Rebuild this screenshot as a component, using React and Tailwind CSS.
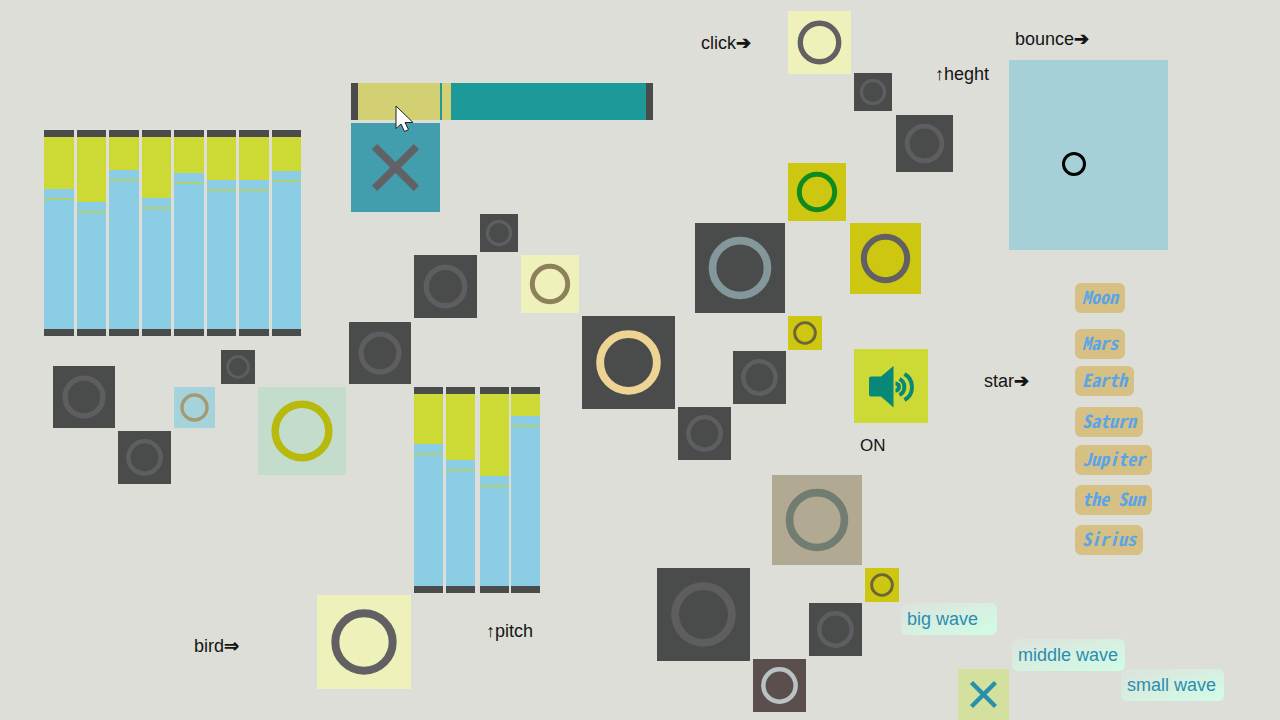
import React, { useState } from 'react';

const bangs = [
  { id: 'click', className: 'left-[788px] top-[11px] size-[63px] bg-[#eef1b9] text-[#626063]' },
  { id: 'height 1', className: 'left-[854px] top-[73px] size-[38px] bg-[#4a4c4b] text-[#5e5e61]' },
  { id: 'height 2', className: 'left-[896px] top-[115px] size-[57px] bg-[#4a4c4b] text-[#5e5e61]' },
  { id: 'green', className: 'left-[788px] top-[163px] size-[58px] bg-[#cec711] text-[#108a1e]' },
  { id: 'steel', className: 'left-[695px] top-[223px] size-[90px] bg-[#4a4c4b] text-[#84979b]' },
  { id: 'yellow 1', className: 'left-[850px] top-[223px] size-[71px] bg-[#cec711] text-[#626063]' },
  { id: 'yellow 2', className: 'left-[788px] top-[316px] size-[34px] bg-[#cec711] text-[#6c6636]' },
  { id: 'step 1', className: 'left-[733px] top-[351px] size-[53px] bg-[#4a4c4b] text-[#5e5e61]' },
  { id: 'step 2', className: 'left-[678px] top-[407px] size-[53px] bg-[#4a4c4b] text-[#5e5e61]' },
  { id: 'sand', className: 'left-[582px] top-[316px] size-[93px] bg-[#4a4c4b] text-[#edd494]' },
  { id: 'cream', className: 'left-[521px] top-[255px] size-[58px] bg-[#eef1b9] text-[#8d815c]' },
  { id: 'step 3', className: 'left-[480px] top-[214px] size-[38px] bg-[#4a4c4b] text-[#5e5e61]' },
  { id: 'step 4', className: 'left-[414px] top-[255px] size-[63px] bg-[#4a4c4b] text-[#5e5e61]' },
  { id: 'step 5', className: 'left-[349px] top-[322px] size-[62px] bg-[#4a4c4b] text-[#5e5e61]' },
  { id: 'mint', className: 'left-[258px] top-[387px] size-[88px] bg-[#c3dccb] text-[#b7ba0d]' },
  { id: 'step 6', className: 'left-[221px] top-[350px] size-[34px] bg-[#4a4c4b] text-[#5e5e61]' },
  { id: 'sky', className: 'left-[174px] top-[387px] size-[41px] bg-[#a4d3dc] text-[#a89a70]' },
  { id: 'step 7', className: 'left-[118px] top-[431px] size-[53px] bg-[#4a4c4b] text-[#5e5e61]' },
  { id: 'step 8', className: 'left-[53px] top-[366px] size-[62px] bg-[#4a4c4b] text-[#5e5e61]' },
  { id: 'bird', className: 'left-[317px] top-[595px] size-[94px] bg-[#eef1b9] text-[#626063]' },
  { id: 'tan', className: 'left-[772px] top-[475px] size-[90px] bg-[#b2a992] text-[#717d70]' },
  { id: 'wave 1', className: 'left-[865px] top-[568px] size-[34px] bg-[#cec711] text-[#6c6636]' },
  { id: 'wave 2', className: 'left-[809px] top-[603px] size-[53px] bg-[#4a4c4b] text-[#5e5e61]' },
  { id: 'wave 3', className: 'left-[753px] top-[659px] size-[53px] bg-[#5b4f4d] text-[#b9c2c5]' },
  { id: 'wave 4', className: 'left-[657px] top-[568px] size-[93px] bg-[#4a4c4b] text-[#5e5e61]' },
];

const stars = [
  { name: 'Moon', className: 'top-[283px]' },
  { name: 'Mars', className: 'top-[329px]' },
  { name: 'Earth', className: 'top-[366px]' },
  { name: 'Saturn', className: 'top-[407px]' },
  { name: 'Jupiter', className: 'top-[445px]' },
  { name: 'the Sun', className: 'top-[485px]' },
  { name: 'Sirius', className: 'top-[525px]' },
];

const waves = [
  { name: 'big wave', className: 'left-[901px] top-[603px] w-24' },
  { name: 'middle wave', className: 'left-[1012px] top-[639px] w-[113px]' },
  { name: 'small wave', className: 'left-[1121px] top-[669px] w-[103px]' },
];

const notes = [
  { text: 'click', arrow: '➔', className: 'left-[701px] top-[31px]' },
  { text: 'bounce', arrow: '➔', className: 'left-[1015px] top-[27px]' },
  { text: 'star', arrow: '➔', className: 'left-[984px] top-[369px]' },
  { text: 'bird', arrow: '⇒', className: 'left-[194px] top-[634px]' },
];

const levels = [52, 65, 33, 61, 36, 43, 43, 34];

const pitches = [
  { level: 50, className: 'left-[414px]' },
  { level: 66, className: 'left-[446px]' },
  { level: 82, className: 'left-[480px]' },
  { level: 22, className: 'left-[511px]' },
];

const Bang = ({ id, className }) => (
  <button aria-label={id} className={`absolute ${className}`}>
    <svg viewBox="0 0 100 100" className="size-full">
      <circle cx="50" cy="50" r="30.5" fill="none" stroke="currentColor" strokeWidth="8.5" />
    </svg>
  </button>
);

const VSlider = ({ label, initial }) => {
  const [level, setLevel] = useState(initial);

  return (
    <label className="relative flex h-[206px] w-full flex-col border-y-[7px] border-[#4a4c4b] bg-[#8acde5]">
      <span className="bg-[#cdd934]" style={{ height: level }} />
      <span className="mt-[9px] h-[2px] bg-[#b2d070]" />
      <input
        type="range"
        min="0"
        max="181"
        value={level}
        aria-label={label}
        onChange={(e) => setLevel(Number(e.target.value))}
        className="absolute inset-0 size-full opacity-0 [writing-mode:vertical-lr]"
      />
    </label>
  );
};

const HSlider = () => {
  const [level, setLevel] = useState(82);

  return (
    <label className="absolute left-[351px] top-[83px] flex h-[37px] w-[302px] border-x-[7px] border-[#4a4c4b] bg-[#1d9999]">
      <span className="bg-[#d3d074]" style={{ width: level }} />
      <span className="ml-[2px] w-[9px] bg-[#d3d074]" />
      <input
        type="range"
        min="0"
        max="277"
        value={level}
        aria-label="speed"
        onChange={(e) => setLevel(Number(e.target.value))}
        className="absolute inset-0 size-full opacity-0"
      />
    </label>
  );
};

const Toggle = ({ label, className }) => {
  const [on, setOn] = useState(true);

  return (
    <label className={`absolute ${className}`}>
      <input
        type="checkbox"
        checked={on}
        aria-label={label}
        onChange={() => setOn(!on)}
        className="absolute inset-0 size-full opacity-0"
      />
      <svg viewBox="0 0 100 100" className="size-full">
        {on && <path d="M26.500 26.500l47 47M73.500 26.500l-47 47" stroke="currentColor" strokeWidth="8.5" />}
      </svg>
    </label>
  );
};

const App = () => {
  const [sound, setSound] = useState(true);

  return (
    <main className="relative min-h-screen overflow-hidden bg-[#deded8] font-['Liberation_Sans',Arial,sans-serif] text-[18px] leading-6 text-[#151515]">
      {/* Volume bank */}
      <div className="absolute left-[44px] top-[130px] flex w-[257px] gap-[3px]">
        {levels.map((level, i) => (
          <VSlider key={i} label={`level ${i + 1}`} initial={level} />
        ))}
      </div>

      {/* Pitch bank */}
      {pitches.map((p, i) => (
        <div key={i} className={`absolute top-[387px] w-[29px] ${p.className}`}>
          <VSlider label={`pitch ${i + 1}`} initial={p.level} />
        </div>
      ))}

      <HSlider />

      <Toggle label="metro" className="left-[351px] top-[123px] size-[89px] bg-[#429dac] text-[#626266]" />
      <Toggle label="wave" className="left-[958px] top-[669px] size-[51px] bg-[#d4e09d] text-[#2690ad]" />

      {bangs.map((b) => (
        <Bang key={b.id} {...b} />
      ))}

      {/* Bounce */}
      <div className="absolute left-[1009px] top-[60px] flex h-[190px] w-[159px]">
        <svg viewBox="0 0 159 190" className="size-full bg-[#a5d0d7]">
          <circle cx="65" cy="104" r="10.5" fill="none" stroke="#000" strokeWidth="3" />
        </svg>
      </div>

      {/* Sound switch */}
      <div className="absolute left-[854px] top-[349px] flex w-[74px] flex-col">
        <button
          id="sound"
          aria-label="sound"
          onClick={() => setSound(!sound)}
          className="size-[74px] bg-[#cdd934] text-[#078878]"
        >
          <svg viewBox="0 0 74 74" className="size-full">
            <path d="M17 27.500h10L39.500 17v41.500L27 47.500H17q-2 0-2-2v-16q0-2 2-2z" fill="currentColor" />
            {sound && (
              <g fill="none" stroke="currentColor" strokeWidth="4">
                <path d="M41.500 34.500a3.500 3.500 0 0 1 0 7" />
                <path d="M45.500 30a9 9 0 0 1 0 16" />
                <path d="M50.500 25a15 15 0 0 1 0 26" />
              </g>
            )}
          </svg>
        </button>
        <label htmlFor="sound" className="mt-[11px] ml-[6px] text-[17px]">{sound ? 'ON' : 'OFF'}</label>
      </div>

      {notes.map((n) => (
        <p key={n.text} className={`absolute whitespace-nowrap ${n.className}`}>
          {n.text}
          <span className="font-bold">{n.arrow}</span>
        </p>
      ))}
      <p className="absolute left-[935px] top-[62px]">↑heght</p>
      <p className="absolute left-[486px] top-[619px]">↑pitch</p>

      {stars.map((s) => (
        <button
          key={s.name}
          className={`absolute left-[1075px] h-[30px] rounded-md bg-[#d6c084] px-[7px] pb-1 font-['Noto_Sans_Mono_CJK_JP','Liberation_Mono',monospace] text-[18px] leading-6 font-bold text-[#5ba5e6] italic ${s.className}`}
        >
          {s.name}
        </button>
      ))}

      {waves.map((w) => (
        <button
          key={w.name}
          className={`absolute h-8 rounded-md bg-linear-to-br from-[#dce2dc] to-[#d0fde6] px-[6px] text-left whitespace-nowrap text-[#2b8eae] ${w.className}`}
        >
          {w.name}
        </button>
      ))}

      {/* Mouse pointer */}
      <svg viewBox="0 0 20 28" className="pointer-events-none absolute left-[395px] top-[105px] h-7 w-5">
        <path
          d="M1 1v22.500l5-4.500 3.500 7.500 4-2-3.500-7h8z"
          fill="#fff"
          stroke="#222"
          strokeWidth="1"
          strokeLinejoin="round"
        />
      </svg>
    </main>
  );
};

export default App;
